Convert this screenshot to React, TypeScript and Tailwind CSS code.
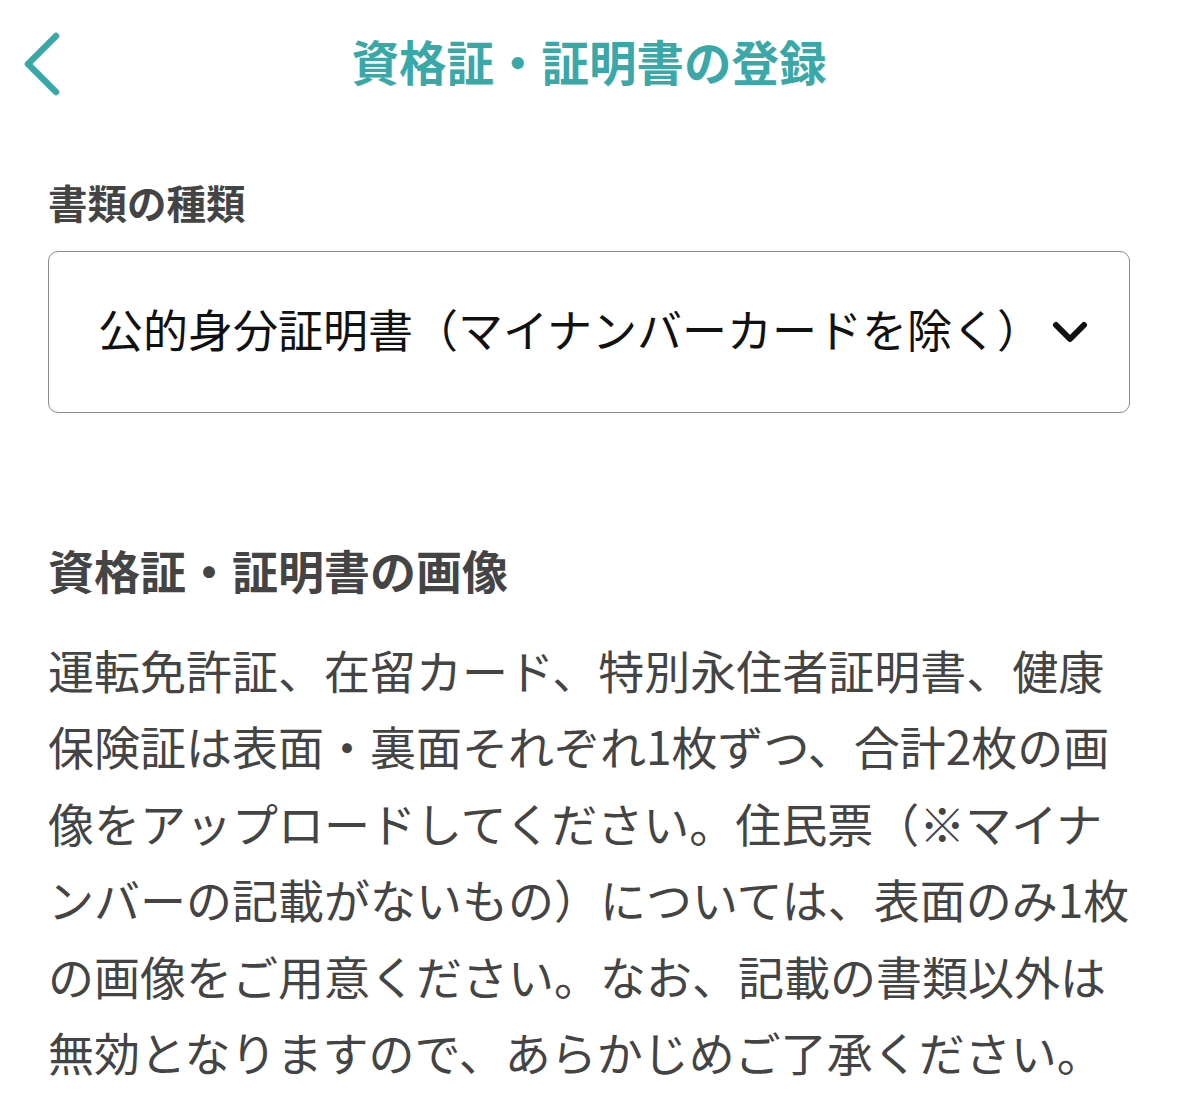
import React from "react";

const FONT = { fontFamily: '"Noto Sans CJK JP", "Noto Sans", sans-serif' };

const bodyLines = [
  "運転免許証、在留カード、特別永住者証明書、健康",
  "保険証は表面・裏面それぞれ1枚ずつ、合計2枚の画",
  "像をアップロードしてください。住民票（※マイナ",
  "ンバーの記載がないもの）については、表面のみ1枚",
  "の画像をご用意ください。なお、記載の書類以外は",
  "無効となりますので、あらかじめご了承ください。",
];

function BackIcon() {
  return (
    <svg width="44" height="66" viewBox="0 0 44 66" fill="none">
      <polyline
        points="35,5 7,33 35,61"
        stroke="#3aa8a8"
        strokeWidth="6.5"
        strokeLinecap="round"
        strokeLinejoin="round"
      />
    </svg>
  );
}

function ChevronDown() {
  return (
    <svg width="38" height="30" viewBox="0 0 38 30" fill="none">
      <polyline
        points="5,8 19,22 33,8"
        stroke="#111"
        strokeWidth="6"
        strokeLinecap="round"
        strokeLinejoin="round"
      />
    </svg>
  );
}

export default function App() {
  return (
    <div className="w-[1178px] min-h-[1113px] bg-white" style={FONT}>
      <header className="relative flex items-center justify-center h-[130px] pb-[9px]">
        <button className="absolute left-[21px] top-[31px]">
          <BackIcon />
        </button>
        <h1 className="text-[47.5px] font-bold text-[#3aa8a8] leading-none">
          資格証・証明書の登録
        </h1>
      </header>

      <div className="px-[48px]">
        <p className="text-[39.5px] font-bold text-[#444] leading-none mt-[52px]">
          書類の種類
        </p>
        <div className="mt-[29px] h-[162px] rounded-[10px] border border-[#8c8c8c] flex items-center justify-between pl-[49px] pr-[40px]">
          <span className="text-[45px] text-[#111] leading-none whitespace-nowrap mb-[6px]">
            公的身分証明書（マイナンバーカードを除く）
          </span>
          <ChevronDown />
        </div>

        <h2 className="text-[46px] font-bold text-[#444] leading-none mt-[133px]">
          資格証・証明書の画像
        </h2>
        <p className="text-[46px] text-[#444] leading-[76.6px] mt-[39px] whitespace-nowrap">
          {bodyLines.map((line, i) => (
            <React.Fragment key={i}>
              {line}
              {i < bodyLines.length - 1 && <br />}
            </React.Fragment>
          ))}
        </p>
      </div>
    </div>
  );
}
